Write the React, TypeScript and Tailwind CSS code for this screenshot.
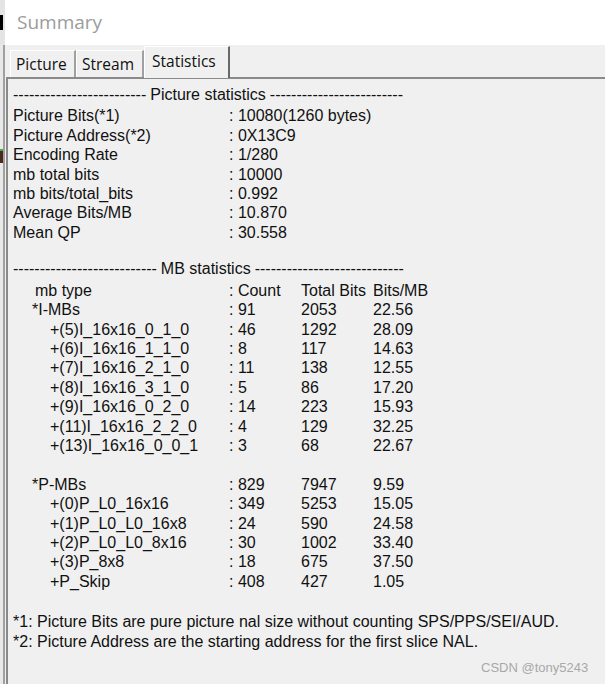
import React from 'react';

const body = { fontFamily: '"Liberation Sans", Arial, sans-serif' };

const picRows: [string, string][] = [
  ['Picture Bits(*1)', ': 10080(1260 bytes)'],
  ['Picture Address(*2)', ': 0X13C9'],
  ['Encoding Rate', ': 1/280'],
  ['mb total bits', ': 10000'],
  ['mb bits/total_bits', ': 0.992'],
  ['Average Bits/MB', ': 10.870'],
  ['Mean QP', ': 30.558'],
];

type MbRow = { label: string; indent: number; count: string; total: string; per: string };

const iRows: MbRow[] = [
  { label: '*I-MBs', indent: 19, count: ': 91', total: '2053', per: '22.56' },
  { label: '+(5)I_16x16_0_1_0', indent: 37, count: ': 46', total: '1292', per: '28.09' },
  { label: '+(6)I_16x16_1_1_0', indent: 37, count: ': 8', total: '117', per: '14.63' },
  { label: '+(7)I_16x16_2_1_0', indent: 37, count: ': 11', total: '138', per: '12.55' },
  { label: '+(8)I_16x16_3_1_0', indent: 37, count: ': 5', total: '86', per: '17.20' },
  { label: '+(9)I_16x16_0_2_0', indent: 37, count: ': 14', total: '223', per: '15.93' },
  { label: '+(11)I_16x16_2_2_0', indent: 37, count: ': 4', total: '129', per: '32.25' },
  { label: '+(13)I_16x16_0_0_1', indent: 37, count: ': 3', total: '68', per: '22.67' },
];

const pRows: MbRow[] = [
  { label: '*P-MBs', indent: 19, count: ': 829', total: '7947', per: '9.59' },
  { label: '+(0)P_L0_16x16', indent: 37, count: ': 349', total: '5253', per: '15.05' },
  { label: '+(1)P_L0_L0_16x8', indent: 37, count: ': 24', total: '590', per: '24.58' },
  { label: '+(2)P_L0_L0_8x16', indent: 37, count: ': 30', total: '1002', per: '33.40' },
  { label: '+(3)P_8x8', indent: 37, count: ': 18', total: '675', per: '37.50' },
  { label: '+P_Skip', indent: 37, count: ': 408', total: '427', per: '1.05' },
];

function Header({ title, left, right }: { title: string; left: number; right: number }) {
  return (
    <div className="flex h-[19.4px] items-center whitespace-nowrap">
      <span>{'-'.repeat(left)}</span>
      <span className="px-[4px]">{title}</span>
      <span>{'-'.repeat(right)}</span>
    </div>
  );
}

function MbLine({ row }: { row: MbRow }) {
  return (
    <div className="grid h-[19.4px] grid-cols-[216px_72px_72px_1fr] items-center whitespace-nowrap">
      <span style={{ paddingLeft: row.indent }}>{row.label}</span>
      <span>{row.count}</span>
      <span>{row.total}</span>
      <span>{row.per}</span>
    </div>
  );
}

function Tab({ label, active, w }: { label: string; active?: boolean; w: string }) {
  if (active) {
    return (
      <div
        className={`${w} relative z-10 -mb-[2px] flex h-[32px] items-start border-l border-t border-l-white border-t-white border-r-2 border-r-[#696969] bg-[#f0f0f0] pl-[7px] pt-[3px] text-[15.5px] text-[#111]`}
      >
        {label}
      </div>
    );
  }
  return (
    <div
      className={`${w} mt-[4px] flex h-[27px] items-center border-l border-t border-l-white border-t-white border-r-2 border-r-[#a0a0a0] bg-[#f0f0f0] pl-[5px] pt-[2px] text-[15.5px] text-[#111]`}
    >
      {label}
    </div>
  );
}

export default function App() {
  return (
    <div className="relative flex h-[684px] w-[605px] overflow-hidden bg-[#f0f0f0]" style={body}>
      {/* background window peeking out on the left */}
      <div className="flex w-[5px] flex-col">
        <div className="flex h-[45px] flex-col bg-[#e4e4e4] pt-[15px]">
          <div className="h-[15px] w-[3px] bg-black" />
        </div>
        <div className="flex flex-1">
          <div className="flex w-[3px] flex-col bg-[#e8e8e8]">
            <div className="h-[104px]" />
            <div className="h-[2px] bg-[#3cb44a]" />
            <div className="h-[12px] bg-[#4a2a1a]" />
          </div>
          <div className="w-[2px] bg-[#a0a0a0]" />
        </div>
      </div>

      <div className="flex flex-1 flex-col">
        {/* title */}
        <div className="flex h-[45px] items-center bg-white pl-[12px]">
          <span className="text-[19px] text-[#9c9c9c]" style={{ fontFamily: '"Open Sans", sans-serif' }}>
            Summary
          </span>
        </div>

        {/* tabs */}
        <div className="flex items-start pl-[5px] pt-[1px]" style={{ fontFamily: '"Open Sans", sans-serif' }}>
          <Tab label="Picture" w="w-[66px]" />
          <Tab label="Stream" w="w-[68px]" />
          <Tab label="Statistics" w="w-[86px]" active />
        </div>

        {/* panel */}
        <div className="ml-[1px] flex flex-1 flex-col border-l-2 border-t-2 border-l-[#8a8a8a] border-t-[#8a8a8a] pl-[5px] pt-[6px] text-[16px] text-[#111]">
          <Header title="Picture statistics" left={25} right={25} />
          {picRows.map(([k, v]) => (
            <div key={k} className="grid h-[19.4px] grid-cols-[216px_1fr] items-center whitespace-nowrap">
              <span>{k}</span>
              <span>{v}</span>
            </div>
          ))}
          <div className="h-[19.4px]" />
          <Header title="MB statistics" left={27} right={28} />
          <div className="grid h-[19.4px] grid-cols-[216px_72px_72px_1fr] items-center whitespace-nowrap">
            <span className="pl-[22px]">mb type</span>
            <span>: Count</span>
            <span>Total Bits</span>
            <span>Bits/MB</span>
          </div>
          {iRows.map(r => (
            <MbLine key={r.label} row={r} />
          ))}
          <div className="h-[19.4px]" />
          {pRows.map(r => (
            <MbLine key={r.label} row={r} />
          ))}
          <div className="h-[21px]" />
          <div className="h-[19.4px] whitespace-nowrap">*1: Picture Bits are pure picture nal size without counting SPS/PPS/SEI/AUD.</div>
          <div className="h-[19.4px] whitespace-nowrap">*2: Picture Address are the starting address for the first slice NAL.</div>
        </div>
      </div>

      <div className="absolute left-[481px] top-[658px] text-[13px] text-[#a8a8a8]">CSDN @tony5243</div>
    </div>
  );
}
